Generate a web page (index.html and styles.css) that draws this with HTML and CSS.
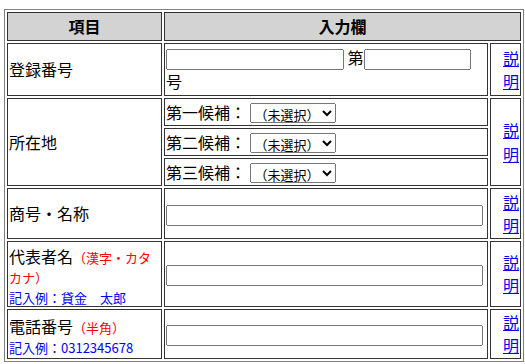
FILE: index.html
```html
<!DOCTYPE html>
<html lang="ja">
  <head>
    <meta charset="UTF-8" />
    <title>申請フォーム</title>
    <link rel="stylesheet" href="styles.css">
  </head>
  <body>
    <table class="form-table">
      <colgroup>
        <col class="col-label" />
        <col class="col-input" />
        <col class="col-help" />
      </colgroup>
      <tr class="row-head">
        <th>項目</th>
        <th colspan="2">入力欄</th>
      </tr>
      <tr class="row-reg">
        <td>登録番号</td>
        <td>
          <input type="text" class="reg-a" /> 第<input type="text" class="reg-b" />
          号
        </td>
        <td class="help"><a href="#">説明</a></td>
      </tr>
      <tr class="row-pick">
        <td rowspan="3">所在地</td>
        <td>
          第一候補：
          <select><option>（未選択）</option></select>
        </td>
        <td class="help" rowspan="3"><a href="#">説明</a></td>
      </tr>
      <tr class="row-pick">
        <td>
          第二候補：
          <select><option>（未選択）</option></select>
        </td>
      </tr>
      <tr class="row-pick">
        <td>
          第三候補：
          <select><option>（未選択）</option></select>
        </td>
      </tr>
      <tr class="row-name">
        <td>商号・名称</td>
        <td><input type="text" class="wide" /></td>
        <td class="help"><a href="#">説明</a></td>
      </tr>
      <tr class="row-rep">
        <td class="label-multi">
          代表者名<span class="note">（漢字・カタカナ）</span><br />
          <span class="sample">記入例：貸金　太郎</span>
        </td>
        <td><input type="text" class="wide" /></td>
        <td class="help"><a href="#">説明</a></td>
      </tr>
      <tr class="row-tel">
        <td class="label-multi">
          電話番号<span class="note">（半角）</span><br />
          <span class="sample">記入例：0312345678</span>
        </td>
        <td><input type="text" class="wide" /></td>
        <td class="help"><a href="#">説明</a></td>
      </tr>
    </table>
  </body>
</html>
```

FILE: styles.css
```css
body {
  margin: 9px 1px 0 4px;
  font-family: "Noto Sans CJK JP", "Noto Sans", sans-serif;
  font-size: 16px;
  color: #000;
  background: #fff;
}
.form-table {
  width: 520px;
  table-layout: fixed;
  border: 1px solid #808080;
  border-spacing: 2px;
}
.col-label {
  width: 155px;
}
.col-input {
  width: 324px;
}
.col-help {
  width: 31px;
}
th,
td {
  border: 1px solid #333;
  padding: 1px;
  line-height: 23px;
  vertical-align: middle;
  text-align: left;
}
th {
  background: #d3d3d3;
  text-align: center;
  font-weight: bold;
}
.row-head {
  height: 29px;
}
.row-reg {
  height: 53px;
}
.row-pick {
  height: 28px;
}
.row-pick td {
  line-height: 24px;
}
.row-name {
  height: 51px;
}
.row-rep {
  height: 66px;
}
.row-tel {
  height: 50px;
}
.help {
  text-align: right;
}
.help a {
  color: #0000ee;
}
input {
  box-sizing: border-box;
  height: 21px;
  margin: 0;
  vertical-align: middle;
}
.reg-a {
  width: 178px;
}
.reg-b {
  width: 107px;
}
.wide {
  width: 317px;
}
select {
  box-sizing: border-box;
  width: 86px;
  height: 20px;
  margin-top: 3px;
  font-family: "Noto Sans CJK JP", sans-serif;
  font-size: 13px;
  line-height: 1;
  vertical-align: top;
}
.label-multi {
  line-height: 20px;
  padding: 4px 1px 0;
}
.note {
  color: #ff0000;
  font-size: 13px;
  line-height: 1;
}
.sample {
  color: #0000ff;
  font-size: 13px;
  line-height: 1;
}
```
